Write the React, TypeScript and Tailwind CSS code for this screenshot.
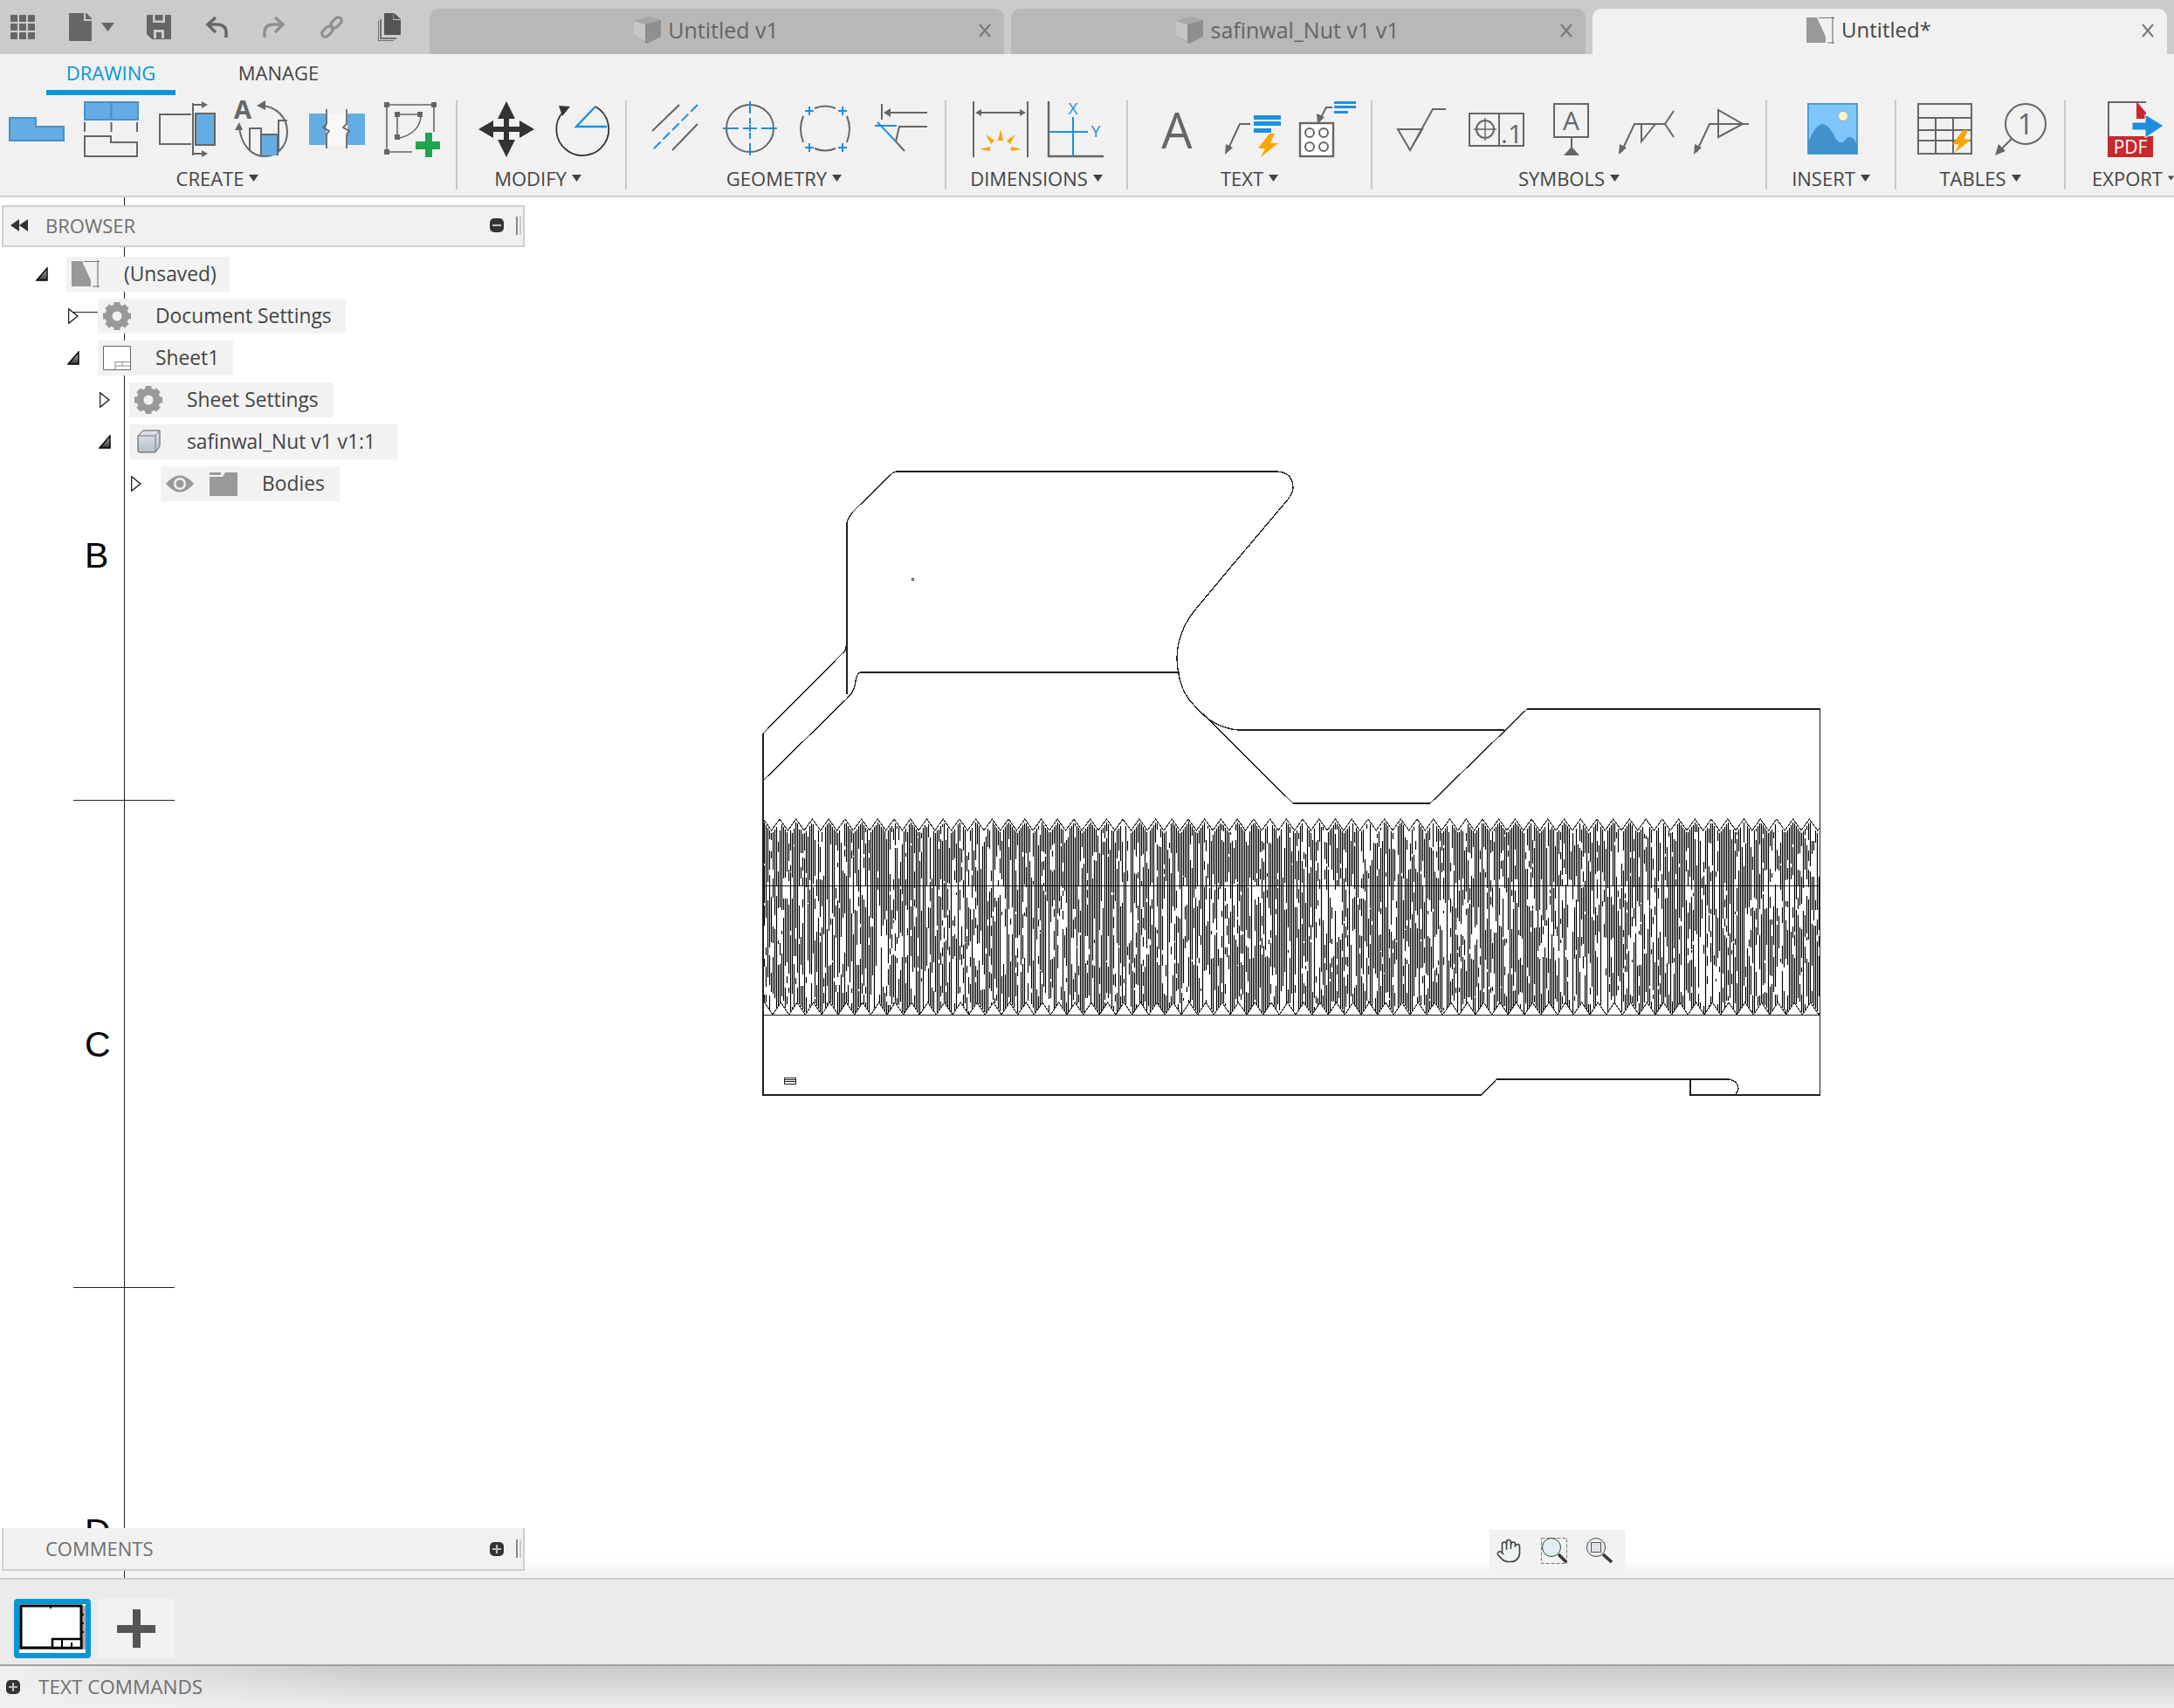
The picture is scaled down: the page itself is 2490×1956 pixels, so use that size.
import { useMemo, type ReactNode } from "react";
import { Hand } from "lucide-react";

const GRAY = "#666666";
const BLUE = "#1e8fe0";
const AMBER = "#f9a400";

// ---- drawing data -------------------------------------------------------

function makeNoise(seed: number) {
  const table: number[] = [];
  let s = seed;
  for (let i = 0; i < 65536; i++) {
    s = (s * 1664525 + 1013904223) >>> 0;
    table.push((s >>> 16) / 65536);
  }
  const at = (a: number, b: number) => table[((a * 1271 + b * 3119) >>> 0) % 65536];
  const smooth = (t: number) => t * t * (3 - 2 * t);
  return (x: number, y: number) => {
    const fx = Math.floor(x);
    const fy = Math.floor(y);
    const u = smooth(x - fx);
    const v = smooth(y - fy);
    const top = at(fx, fy) * (1 - u) + at(fx + 1, fy) * u;
    const bottom = at(fx, fy + 1) * (1 - u) + at(fx + 1, fy + 1) * u;
    return top * (1 - v) + bottom * v;
  };
}

const PITCH = 18.72;

function crest(x: number, start: number) {
  const f = (((x - start) / PITCH) % 1 + 1) % 1;
  return 1 - Math.abs(2 * f - 1);
}

function threadTop(x: number) {
  return 938 + 13 * crest(x, 893);
}

function threadBottom(x: number) {
  return 1162 - 14 * crest(x, 885);
}

function buildHatch() {
  const noise = makeNoise(77);
  let d = "";
  for (let x = 875; x < 2084; x += 2) {
    const y0 = Math.ceil(threadTop(x)) + 3;
    const y1 = Math.floor(threadBottom(x));
    let start = -1;
    for (let y = y0; y <= y1; y++) {
      const n = noise(x / 2.6, y / 34) * 0.62 + noise(x / 1.6, y / 11 + 40) * 0.38;
      const limit = y < 1014 ? 0.41 : 0.45;
      // thin jagged strands stay inside the white channels
      const strand = x % 8 === 1 && noise(x / 2, y / 14 + 90) > 0.35;
      const on = n > limit || strand;
      if (on && start < 0) start = y;
      if ((!on || y === y1) && start >= 0) {
        if (y - start > 2) d += `M${x + 0.5} ${start}V${y}`;
        start = -1;
      }
    }
  }
  return d;
}

function buildZigzag(edge: (x: number) => number, start: number) {
  let d = `M874 ${edge(874).toFixed(1)}`;
  for (let x = start - PITCH; x < 2084; x += PITCH / 2) {
    if (x > 874) d += `L${x.toFixed(1)} ${edge(x).toFixed(1)}`;
  }
  return `${d}L2084 ${edge(2084).toFixed(1)}`;
}

function NutDrawing() {
  const hatch = useMemo(buildHatch, []);
  const top = useMemo(() => buildZigzag(threadTop, 893), []);
  const bottom = useMemo(() => buildZigzag(threadBottom, 885), []);
  return (
    <svg
      className="absolute left-0 top-0 h-[1581px] w-[2490px]"
      viewBox="0 226 2490 1581"
      fill="none"
      stroke="#1f1f1f"
      strokeWidth="1.3"
      shapeRendering="crispEdges"
    >
      {/* sheet frame */}
      <path d="M142.5 226V1807M84 357.5H200M84 916.5H200M84 1474.5H200" stroke="#222" strokeWidth="1.1" />
      {/* part outline */}
      <path d="M970 795V598Q974 588 980 583L1023 541Q1025 540 1028 540H1463Q1481 541 1481 559Q1481 566 1470 578L1405 655L1370 697Q1349 722 1348 753Q1349 790 1368 808Q1388 833 1418 836H1723" />
      <path d="M1351 770H985Q981 772 980 780Q979 792 970 800L874 894" />
      <path d="M969.5 737Q969 746 965 748L874 840" />
      <path d="M1368 808L1481 920H1638L1749 812H2084.5V1254H1988L1991 1247Q1991 1238 1980 1236H1714L1697 1254H874V840" />
      <path d="M1936 1236V1254H1988" />
      <path d="M874 1162.5H2084M874 1014.5H2084" strokeWidth="1.6" />
      <rect x="1044" y="662" width="2.5" height="2.5" strokeWidth="0.8" />
      <path d="M898 1234H911V1241H898ZM898 1236.5H911M898 1238.5H911" strokeWidth="1" />
      {/* thread */}
      <path d={hatch} strokeWidth="1.15" stroke="#000" shapeRendering="auto" />
      <path d={top} strokeWidth="1.1" stroke="#333" />
      <path d={bottom} strokeWidth="1.1" stroke="#333" />
    </svg>
  );
}

// ---- small icons --------------------------------------------------------

function Ico({ children }: { children: ReactNode }) {
  return (
    <svg className="h-16 w-16 shrink-0 overflow-visible" viewBox="0 0 64 64" fill="none" stroke={GRAY} strokeWidth="2">
      {children}
    </svg>
  );
}

function Bolt({ x, y, s = 1 }: { x: number; y: number; s?: number }) {
  return (
    <polygon
      transform={`translate(${x} ${y}) scale(${s})`}
      points="13,0 0,17 8,17 3,27 23,11 14,11 19,0"
      fill={AMBER}
      stroke="none"
    />
  );
}

const BaseViewIcon = () => (
  <Ico>
    <path d="M1 19H31V29H63V45H1Z" fill="#63ade4" stroke="#4f8fc0" />
  </Ico>
);

const ProjectedIcon = () => (
  <Ico>
    <rect x="1" y="1" width="61" height="20" fill="#63ade4" stroke="#4f8fc0" />
    <path d="M31.5 1V21" stroke="#4f8fc0" />
    <path d="M1 24V35M31.5 24V35M61 24V35" />
    <path d="M1 40H31V47H61V63H1Z" />
  </Ico>
);

const SectionIcon = () => (
  <Ico>
    <path d="M37 15H1V49H37" />
    <rect x="42" y="14" width="22" height="36" fill="#63ade4" />
    <path d="M39 2V62M39 4H50M39 60H50" />
    <path d="M49 0L56 4L49 8ZM49 56L56 60L49 64Z" fill={GRAY} stroke="none" />
  </Ico>
);

const DetailIcon = () => (
  <Ico>
    <text x="0" y="20" fontSize="29" fontWeight="700" fill={GRAY} stroke="none">A</text>
    <path d="M32 5C48 6 61 18 61 35C61 51 50 63 35 63C20 63 8 50 6 29" />
    <path d="M26 5L36 -1V10ZM6 24L1 33H10Z" fill={GRAY} stroke="none" />
    <rect x="32" y="38" width="18" height="24" fill="#63ade4" stroke="none" />
    <path d="M18 57V31H31V63M32 38H50V62M51 56V22H61" />
  </Ico>
);

const BreakIcon = () => (
  <Ico>
    <rect x="0" y="14" width="64" height="36" fill="#63ade4" stroke="none" />
    <rect x="20" y="14" width="24" height="36" fill="#f8f8f8" stroke="none" />
    <path d="M20 9V26L16 30L23 34L20 38V54M43 9V26L39 30L46 34L43 38V54" strokeWidth="1.8" />
  </Ico>
);

const SketchIcon = () => (
  <Ico>
    <path d="M6 4H54M3 7V55M6 58H32M57 7V35" strokeWidth="1.6" />
    <path d="M0 1H6V7H0ZM54 1H60V7H54ZM0 55H6V61H0ZM12 12H18V18H12ZM38 12H44V18H38ZM12 38H18V44H12Z" fill={GRAY} stroke="none" />
    <path d="M18 15H38M15 18V38" strokeWidth="1.6" />
    <path d="M42 18Q40 36 18 42" strokeWidth="1.6" />
    <path d="M47 36H55V46H64V55H55V64H47V55H36V46H47Z" fill="#1fa750" stroke="none" />
  </Ico>
);

const MoveIcon = () => (
  <Ico>
    <path d="M32 0L22 20H29V29H17V22L0 32L17 42V35H29V44H22L32 64L42 44H35V35H47V42L64 32L47 22V29H35V20H42Z" fill="#333" stroke="none" />
  </Ico>
);

const RotateIcon = () => (
  <Ico>
    <path d="M11 12A30 30 0 1 0 48 6" stroke="#333" strokeWidth="1.8" />
    <polygon points="6,5 19,6 10,17" fill="#333" stroke="none" />
    <path d="M48 6L26 29H61" stroke={BLUE} strokeWidth="2.4" />
  </Ico>
);

const CenterlineIcon = () => (
  <Ico>
    <path d="M38 4L7 34M59 26L30 56" />
    <path d="M59 4L6 57" stroke={BLUE} strokeDasharray="11 4" />
  </Ico>
);

const CenterMarkIcon = () => (
  <Ico>
    <circle cx="33" cy="31" r="27" />
    <path d="M33 0V14M33 19V26M33 36V43M33 48V62M2 31H20M25 31H30M36 31H41M46 31H64M29 31H37M33 27V35" stroke={BLUE} />
  </Ico>
);

const CenterPatternIcon = () => (
  <Ico>
    <path d="M21 8Q33 3 45 8M21 54Q33 59 45 54M8 17Q2 31 8 47M58 17Q64 31 58 47" />
    <path d="M15 6V16M10 11H20M53 6V16M48 11H58M15 48V58M10 53H20M53 48V58M48 53H58" stroke={BLUE} />
  </Ico>
);

const EdgeLeaderIcon = () => (
  <Ico>
    <path d="M12 3V21" />
    <path d="M17 13H64" />
    <path d="M14 13L22 8V18Z" fill={GRAY} stroke="none" />
    <path d="M64 29H32L28 46L38 57" />
    <path d="M4 28H29M7 24L28 46" stroke={BLUE} />
  </Ico>
);

const DimensionIcon = () => (
  <Ico>
    <path d="M1 0V64M63 0V64M8 13H56" />
    <path d="M3 13L10 9V17ZM61 13L54 9V17Z" fill={GRAY} stroke="none" />
    <path d="M32 32L35 45H29ZM15 38L25 45L21 49ZM49 38L39 45L43 49ZM8 55L20 52V57ZM56 55L44 52V57Z" fill={AMBER} stroke="none" />
  </Ico>
);

const OrdinateIcon = () => (
  <Ico>
    <path d="M1 0V63H64" strokeWidth="2.4" />
    <path d="M29 18V63M1 35H46" stroke={BLUE} />
    <text x="29" y="15" fontSize="19" textAnchor="middle" fill={BLUE} stroke="none">X</text>
    <text x="55" y="41" fontSize="19" textAnchor="middle" fill={BLUE} stroke="none">Y</text>
  </Ico>
);

const TextIcon = () => (
  <Ico>
    <text x="32" y="54" fontSize="56" fontWeight="500" textAnchor="middle" fill={GRAY} stroke="none">A</text>
  </Ico>
);

const NoteIcon = () => (
  <Ico>
    <path d="M30 26H18L4 56" />
    <path d="M1 61L2 49L10 53Z" fill={GRAY} stroke="none" />
    <path d="M34 16H65V21H34ZM34 23H65V28H34ZM34 31H54V36H34Z" fill={BLUE} stroke="none" />
    <Bolt x={39} y={37} />
  </Ico>
);

const HoleNoteIcon = () => (
  <Ico>
    <rect x="1" y="25" width="38" height="38" fill="#fff" strokeWidth="2.4" />
    <circle cx="12" cy="36" r="5" />
    <circle cx="28" cy="36" r="5" />
    <circle cx="12" cy="52" r="5" />
    <circle cx="28" cy="52" r="5" />
    <path d="M38 7H31L24 20" />
    <path d="M21 26L20 14L29 18Z" fill={GRAY} stroke="none" />
    <path d="M40 0H65V3H40ZM40 5H65V8H40ZM40 11H56V14H40Z" fill={BLUE} stroke="none" />
  </Ico>
);

const SurfaceIcon = () => (
  <Ico>
    <path d="M5 32H33L19 56ZM19 56L45 9H60" />
  </Ico>
);

const FeatureFrameIcon = () => (
  <Ico>
    <rect x="1" y="14" width="62" height="37" />
    <path d="M35 14V51" />
    <circle cx="19" cy="32" r="10" />
    <path d="M19 19V45M6 32H32" strokeWidth="1.4" />
    <text x="37" y="48" fontSize="30" fill={GRAY} stroke="none">.1</text>
  </Ico>
);

const DatumIcon = () => (
  <Ico>
    <rect x="12" y="3" width="39" height="38" />
    <text x="31.5" y="33" fontSize="30" textAnchor="middle" fill={GRAY} stroke="none">A</text>
    <path d="M32 41V54" />
    <path d="M23 62H41L32 52Z" fill={GRAY} stroke="none" />
  </Ico>
);

const WeldIcon = () => (
  <Ico>
    <path d="M53 26H18L3 58M26 26V46L42 26M53 26L63 11M53 26L63 41" />
    <path d="M0 61L1 49L9 53Z" fill={GRAY} stroke="none" />
  </Ico>
);

const TaperIcon = () => (
  <Ico>
    <path d="M63 26H18L3 58M28 10V41L56 26Z" />
    <path d="M0 61L1 49L9 53Z" fill={GRAY} stroke="none" />
  </Ico>
);

const ImageIcon = () => (
  <Ico>
    <rect x="5" y="3" width="56" height="57" fill="#7fc6fb" stroke="#4a9ed8" />
    <circle cx="45" cy="17" r="6" fill="#fdf5c0" stroke="#8dbfe6" />
    <path d="M5 60V48Q13 26 22 26Q30 28 36 42Q41 50 46 46Q50 40 54 41Q60 44 61 52V60Z" fill="#4291cb" stroke="none" />
  </Ico>
);

const TableIcon = () => (
  <Ico>
    <path d="M1 3H62V60H1ZM1 19H62M1 33H62M1 45H62M21 19V60M41 19V60" />
    <Bolt x={40} y={33} s={0.95} />
  </Ico>
);

const BalloonIcon = () => (
  <Ico>
    <circle cx="38" cy="26" r="23" />
    <text x="38" y="38" fontSize="32" textAnchor="middle" fill={GRAY} stroke="none">1</text>
    <path d="M22 43L9 56" />
    <path d="M3 62L7 49L15 57Z" fill={GRAY} stroke="none" />
  </Ico>
);

const ExportIcon = () => (
  <Ico>
    <path d="M44 1H1V44" />
    <path d="M33 0L44 13V20H33Z" fill="#c9282d" stroke="none" />
    <rect x="0" y="40" width="52" height="24" fill="#c9282d" stroke="none" />
    <path d="M28 24H43V15L64 28L43 42V33H28Z" fill={BLUE} stroke="#f1f1f1" strokeWidth="1" />
    <text x="26" y="60" fontSize="21" textAnchor="middle" fill="#fff" stroke="none">PDF</text>
  </Ico>
);

function Caret() {
  return (
    <svg className="h-2 w-[11px]" viewBox="0 0 11 8">
      <path d="M0 0H11L5.5 8Z" fill="#444" />
    </svg>
  );
}

function CubeIcon() {
  return (
    <svg className="h-8 w-8 shrink-0" viewBox="0 0 32 32">
      <path d="M1 5L17 0L32 4V23L16 31L1 21Z" fill="#8f8f8f" />
      <path d="M1 5L17 0L32 4L14 9Z" fill="#a8a8a8" />
      <path d="M1 5L14 9V29L1 21Z" fill="#c6c6c6" />
    </svg>
  );
}

function DrawingIcon() {
  return (
    <svg className="h-8 w-8 shrink-0" viewBox="0 0 32 32">
      <path d="M0 1H12L22 23V30H0Z" fill="#999" />
      <path d="M14 1.5H32M30 0V31M24 30H32" stroke="#777" strokeWidth="1.2" fill="none" />
    </svg>
  );
}

function TabClose() {
  return (
    <svg className="h-[18px] w-[18px] shrink-0" viewBox="0 0 18 18">
      <path d="M3 2L15 16M15 2L3 16" stroke="#777" strokeWidth="2" />
    </svg>
  );
}

function Gear() {
  const teeth = [0, 45, 90, 135, 180, 225, 270, 315];
  return (
    <svg className="h-8 w-8 shrink-0" viewBox="0 0 32 32">
      <circle cx="16" cy="16" r="9.5" fill="none" stroke="#999" strokeWidth="8" />
      {teeth.map((a) => (
        <rect key={a} x="12.5" y="0" width="7" height="6" fill="#999" transform={`rotate(${a} 16 16)`} />
      ))}
    </svg>
  );
}

function SheetIcon() {
  return (
    <svg className="h-8 w-8 shrink-0" viewBox="0 0 32 32">
      <path d="M0.5 2.5H31.5V29.5H0.5Z" fill="#fff" stroke="#666" />
      <path d="M14 20.5H31M14 25H31M14 20V29M22 20V25" stroke="#888" fill="none" />
    </svg>
  );
}

function ComponentIcon() {
  return (
    <svg className="h-8 w-8 shrink-0" viewBox="0 0 32 32">
      <defs>
        <linearGradient id="cube" x1="0" y1="0" x2="0" y2="1">
          <stop offset="0" stopColor="#dfe3ea" />
          <stop offset="1" stopColor="#b8c0cc" />
        </linearGradient>
      </defs>
      <path d="M4 9L10 3H29V21L24 28H6Q4 28 4 26Z" fill="url(#cube)" stroke="#555" />
      <path d="M4 9H24V28M24 9L29 3" fill="none" stroke="#777" />
    </svg>
  );
}

function EyeIcon() {
  return (
    <svg className="h-8 w-8 shrink-0" viewBox="0 0 32 32">
      <path d="M0 16Q16 -3 32 16Q16 35 0 16Z" fill="#999" />
      <circle cx="16" cy="16" r="7" fill="#f2f2f2" />
      <circle cx="16" cy="16" r="4.5" fill="#999" />
    </svg>
  );
}

function FolderIcon() {
  return (
    <svg className="h-8 w-8 shrink-0" viewBox="0 0 32 32">
      <path d="M0 3H13V6H0ZM0 8H15L18 3H32V30H0Z" fill="#999" />
    </svg>
  );
}

function Expander({ open, className }: { open: boolean; className?: string }) {
  return open ? (
    <svg className={`h-4 w-[14px] shrink-0 ${className ?? ""}`} viewBox="0 0 14 16">
      <defs>
        <linearGradient id="tri" x1="0" y1="0" x2="0" y2="1">
          <stop offset="0" stopColor="#bbb" />
          <stop offset="1" stopColor="#333" />
        </linearGradient>
      </defs>
      <path d="M13 1V15H1Z" fill="url(#tri)" stroke="#000" strokeWidth="1.4" />
    </svg>
  ) : (
    <svg className={`h-[18px] w-3 shrink-0 ${className ?? ""}`} viewBox="0 0 12 18">
      <path d="M0.7 0.7L11 9L0.7 17.3Z" fill="#fff" stroke="#000" strokeWidth="1.1" />
    </svg>
  );
}

function RoundBadge({ plus }: { plus?: boolean }) {
  return (
    <div className="flex h-4 w-4 shrink-0 items-center justify-center rounded-[5px] bg-[#333]">
      <svg className="h-3 w-3" viewBox="0 0 12 12">
        <path d={plus ? "M1 6H11M6 1V11" : "M1 6H11"} stroke="#bbb" strokeWidth="2.2" />
      </svg>
    </div>
  );
}

// ---- title bar and ribbon -----------------------------------------------

function QuickAccess() {
  return (
    <div className="flex w-[492px] shrink-0 items-center pl-3 text-[#666]">
      <svg className="h-7 w-7" viewBox="0 0 28 28" fill="#666">
        {[0, 10, 20].map((y) =>
          [0, 10, 20].map((x) => <rect key={`${x}-${y}`} x={x} y={y} width="8" height="8" rx="1" />),
        )}
      </svg>
      <svg className="ml-[39px] h-8 w-[26px]" viewBox="0 0 26 32">
        <path d="M1 0H17L26 9V31Q26 32 25 32H1Q0 32 0 31V1Q0 0 1 0Z" fill="#666" />
        <path d="M17 0V9H26Z" fill="#cbcbcb" />
        <path d="M18 0L26 8H18Z" fill="#666" transform="translate(1 -1)" />
      </svg>
      <svg className="ml-[11px] h-[10px] w-[15px]" viewBox="0 0 15 10">
        <path d="M0 0H15L7.5 10Z" fill="#666" />
      </svg>
      <svg className="ml-[37px] h-7 w-7" viewBox="0 0 28 28">
        <path d="M1 0H27Q28 0 28 1V27Q28 28 27 28H6L0 22V1Q0 0 1 0Z" fill="#666" />
        <path d="M7 0H21V9H7ZM8 27V17H20V27H17V20H11V27Z" fill="#cbcbcb" />
        <path d="M9.5 0H18.5V6.5H9.5Z" fill="#666" />
      </svg>
      <svg className="ml-[39px] h-6 w-[26px]" viewBox="0 0 26 24" fill="none" stroke="#666" strokeWidth="3.5">
        <path d="M24 24V18Q24 9 13 9H4" />
        <path d="M12 1L3 9L12 18" />
      </svg>
      <svg className="ml-10 h-6 w-[26px]" viewBox="0 0 26 24" fill="none" stroke="#8f8f8f" strokeWidth="3.5">
        <path d="M2 24V18Q2 9 13 9H22" />
        <path d="M14 1L23 9L14 18" />
      </svg>
      <svg className="ml-10 h-[26px] w-[26px]" viewBox="0 0 26 26" fill="none" stroke="#8f8f8f" strokeWidth="3.2">
        <rect x="-6.5" y="-4" width="14" height="8" rx="4" transform="translate(7.5 18.5) rotate(-45)" />
        <rect x="-7.5" y="-4" width="14" height="8" rx="4" transform="translate(18.5 7.5) rotate(-45)" />
      </svg>
      <svg className="ml-10 h-8 w-[26px]" viewBox="0 0 26 32">
        <path d="M0 9V32H18" fill="none" stroke="#555" strokeWidth="1.5" />
        <path d="M3 7V29H21" fill="none" stroke="#555" strokeWidth="1.5" />
        <path d="M7 1Q7 0 8 0H17L26 8V24Q26 25 25 25H8Q7 25 7 24Z" fill="#555" />
        <path d="M17 0V8H26Z" fill="#cbcbcb" />
        <path d="M17.5 -1L26 7H17.5Z" fill="#555" />
      </svg>
    </div>
  );
}

function DocTab({ icon, label, active }: { icon: ReactNode; label: string; active?: boolean }) {
  return (
    <div
      className={`flex h-[52px] w-[658px] items-center rounded-t-[10px] pb-[2px] pl-[6px] pr-[13px] ${
        active ? "bg-[#f1f1f1] text-[#444]" : "bg-[#b8b8b8] text-[#666]"
      }`}
    >
      <div className={`flex flex-1 items-center justify-center gap-2 leading-none ${active ? "text-[24px]" : "text-[25px]"}`}>
        {icon}
        <span className="-mt-[2px]">{label}</span>
      </div>
      <TabClose />
    </div>
  );
}

function Group({
  label,
  width,
  inset,
  labelClass,
  last,
  children,
}: {
  label: string;
  width: string;
  inset: string;
  labelClass?: string;
  last?: boolean;
  children: ReactNode;
}) {
  return (
    <div className={`flex h-[102px] shrink-0 flex-col ${width} ${last ? "" : "border-r-2 border-[#c8c8c8]"}`}>
      <div className={`flex h-[65px] shrink-0 items-end gap-[22px] ${inset}`}>{children}</div>
      <div className={`mt-[10px] flex h-7 shrink-0 items-center gap-[6px] whitespace-nowrap text-[22px] text-[#444] ${labelClass ?? "justify-center"}`}>
        <span>{label}</span>
        <Caret />
      </div>
    </div>
  );
}

function Ribbon() {
  return (
    <div className="h-[164px] shrink-0 border-b-2 border-[#cfcfcf] bg-[#f1f1f1]">
      <div className="flex h-[47px] text-[22px]">
        <div className="ml-[53px] flex w-[148px] items-center justify-center border-b-[6px] border-[#0696d7] pt-[2px] text-[#0696d7]">
          DRAWING
        </div>
        <div className="ml-11 flex w-[148px] items-center justify-center pb-[6px] pt-[2px] text-[#444]">MANAGE</div>
      </div>
      <div className="mt-[6px] flex">
        <Group label="CREATE" width="w-[524px]" inset="pl-[10px]" labelClass="justify-center pr-6">
          <BaseViewIcon />
          <ProjectedIcon />
          <SectionIcon />
          <DetailIcon />
          <BreakIcon />
          <SketchIcon />
        </Group>
        <Group label="MODIFY" width="w-[194px]" inset="pl-6" labelClass="justify-center pr-2">
          <MoveIcon />
          <RotateIcon />
        </Group>
        <Group label="GEOMETRY" width="w-[366px]" inset="pl-[22px]" labelClass="justify-center pr-1">
          <CenterlineIcon />
          <CenterMarkIcon />
          <CenterPatternIcon />
          <EdgeLeaderIcon />
        </Group>
        <Group label="DIMENSIONS" width="w-[208px]" inset="pl-[30px]">
          <DimensionIcon />
          <OrdinateIcon />
        </Group>
        <Group label="TEXT" width="w-[280px]" inset="pl-6">
          <TextIcon />
          <NoteIcon />
          <HoleNoteIcon />
        </Group>
        <Group label="SYMBOLS" width="w-[452px]" inset="pl-6">
          <SurfaceIcon />
          <FeatureFrameIcon />
          <DatumIcon />
          <WeldIcon />
          <TaperIcon />
        </Group>
        <Group label="INSERT" width="w-[148px]" inset="pl-[42px]">
          <ImageIcon />
        </Group>
        <Group label="TABLES" width="w-[194px]" inset="pl-6">
          <TableIcon />
          <BalloonIcon />
        </Group>
        <Group label="EXPORT" width="w-[124px]" inset="pl-12" labelClass="pl-[30px]" last>
          <ExportIcon />
        </Group>
      </div>
    </div>
  );
}

// ---- browser tree -------------------------------------------------------

function TreeRow({
  depth,
  open,
  expanderClass,
  icon,
  label,
  pill,
}: {
  depth: string;
  open: boolean;
  expanderClass: string;
  icon: ReactNode;
  label: string;
  pill: string;
}) {
  return (
    <div className={`flex h-10 items-center ${depth}`}>
      <div className="flex w-9 items-center">
        <Expander open={open} className={expanderClass} />
      </div>
      <div className={`flex h-10 items-center bg-[#f2f2f2] text-[22.8px] text-[#444] ${pill}`}>
        {icon}
        <span className="ml-[28px] whitespace-nowrap">{label}</span>
      </div>
    </div>
  );
}

function Tree() {
  return (
    <div className="absolute left-0 top-[68px] flex flex-col gap-2">
      <TreeRow depth="pl-10" open expanderClass="ml-[1px]" icon={<DrawingIcon />} label="(Unsaved)" pill="pl-[6px] pr-[15px]" />
      <TreeRow depth="pl-[76px]" open={false} expanderClass="ml-[2px]" icon={<Gear />} label="Document Settings" pill="pl-[6px] pr-4" />
      <TreeRow depth="pl-[76px]" open expanderClass="ml-[1px]" icon={<SheetIcon />} label="Sheet1" pill="pl-[6px] pr-4" />
      <TreeRow depth="pl-[112px]" open={false} expanderClass="ml-[2px]" icon={<Gear />} label="Sheet Settings" pill="pl-[6px] pr-[17px]" />
      <TreeRow depth="pl-[112px]" open expanderClass="ml-[1px]" icon={<ComponentIcon />} label="safinwal_Nut v1 v1:1" pill="pl-[6px] pr-[25px]" />
      <TreeRow
        depth="pl-[148px]"
        open={false}
        expanderClass="ml-[2px]"
        icon={
          <>
            <EyeIcon />
            <div className="ml-[18px]">
              <FolderIcon />
            </div>
          </>
        }
        label="Bodies"
        pill="pl-[6px] pr-[17px]"
      />
    </div>
  );
}

function Panel({
  title,
  className,
  leading,
  badge,
}: {
  title: string;
  className: string;
  leading?: ReactNode;
  badge: ReactNode;
}) {
  return (
    <div className={`absolute left-[2px] flex w-[599px] items-center border-x-2 border-b-2 border-[#cfcfcf] bg-[#f1f1f1] ${className}`}>
      <div className="flex w-[47px] shrink-0 items-center pl-[8px]">{leading}</div>
      <span className="flex-1 pl-[1px] text-[22px] text-[#6f6f6f]">{title}</span>
      {badge}
      <div className="ml-[14px] mr-[2px] flex h-[21px] gap-[2px]">
        <div className="w-[2px] bg-[#888]" />
        <div className="w-[2px] bg-[#ccc]" />
      </div>
    </div>
  );
}

function SheetThumb() {
  return (
    <div className="h-[68px] w-[88px] rounded-[4px] border-[6px] border-[#0696d7] bg-white">
      <svg className="h-14 w-[76px]" viewBox="0 0 76 56">
        <rect x="0" y="2" width="76" height="50" fill="#aaa" />
        <rect x="2" y="2" width="69" height="48" fill="#fff" stroke="#000" strokeWidth="3" />
        <rect x="38" y="46" width="33" height="4" fill="#000" />
        <path d="M38 40H71V50H38Z" fill="#fff" stroke="#000" strokeWidth="2.5" />
        <path d="M49 40V50M60 44V50" stroke="#000" strokeWidth="2" />
        <path d="M0 30H3M36 2V5M71 12H74M71 22H74M71 32H74" stroke="#000" strokeWidth="2" />
      </svg>
    </div>
  );
}

function NavBar() {
  return (
    <div className="absolute left-[1706px] top-[1526px] flex h-12 w-[156px] items-center gap-[22px] bg-[#f2f2f2] pl-[7px]">
      <Hand className="h-[30px] w-[30px]" fill="#eef2f3" stroke="#444" strokeWidth={1.3} />
      <svg className="h-[30px] w-[30px]" viewBox="0 0 30 30">
        <rect x="0.5" y="0.5" width="29" height="29" fill="none" stroke="#777" strokeDasharray="4 2" />
        <circle cx="12" cy="11" r="10.5" fill="#dfeeee" stroke="#444" />
        <path d="M20 19L29 28" stroke="#333" strokeWidth="3.6" />
      </svg>
      <svg className="h-[30px] w-[30px]" viewBox="0 0 30 30">
        <circle cx="11" cy="11" r="10.5" fill="#e9f1f1" stroke="#444" />
        <rect x="5.5" y="5.5" width="11" height="11" fill="#dfe4e8" stroke="#555" />
        <path d="M19 19L29 28" stroke="#333" strokeWidth="3.6" />
      </svg>
    </div>
  );
}

export default function App() {
  return (
    <div className="flex h-[1956px] w-[2490px] flex-col overflow-hidden bg-white font-['Open_Sans',sans-serif]">
      <header className="flex h-[62px] shrink-0 bg-[#cbcbcb]">
        <QuickAccess />
        <div className="mt-[10px] flex gap-2">
          <DocTab icon={<CubeIcon />} label="Untitled v1" />
          <DocTab icon={<CubeIcon />} label="safinwal_Nut v1 v1" />
          <DocTab icon={<DrawingIcon />} label="Untitled*" active />
        </div>
      </header>

      <Ribbon />

      <main className="relative flex-1 overflow-hidden bg-white">
        <div className="absolute inset-x-0 bottom-0 h-6 bg-linear-to-b from-white to-[#f1f1f1]" />
        <NutDrawing />
        <span className="absolute left-[97px] top-[390px] font-['Liberation_Sans',sans-serif] text-[41px] leading-none text-black">B</span>
        <span className="absolute left-[97px] top-[950px] font-['Liberation_Sans',sans-serif] text-[41px] leading-none text-black">C</span>
        <span className="absolute left-[97px] top-[1508px] font-['Liberation_Sans',sans-serif] text-[41px] leading-none text-black">D</span>

        <Panel
          title="BROWSER"
          className="top-[9px] h-12 border-t-2 pb-[2px]"
          leading={
            <svg className="h-[14px] w-5" viewBox="0 0 20 14">
              <path d="M10 0V14L0 7ZM20 0V14L10 7Z" fill="#333" />
            </svg>
          }
          badge={<RoundBadge />}
        />
        <Tree />
        <Panel title="COMMENTS" className="top-[1524px] h-[49px]" badge={<RoundBadge plus />} />
        <NavBar />
      </main>

      <div className="flex h-[101px] shrink-0 items-center gap-2 border-y-2 border-t-[#cccccc] border-b-[#a0a0a0] bg-[#ebebeb] pl-4 pt-[14px]">
        <SheetThumb />
        <div className="flex h-[68px] w-[88px] items-center justify-center bg-[#f2f2f2]">
          <svg className="h-11 w-11" viewBox="0 0 44 44">
            <path d="M18 0H27V18H44V27H27V44H18V27H0V18H18Z" fill="#555" />
          </svg>
        </div>
      </div>

      <div className="relative flex h-12 shrink-0 items-center bg-linear-to-b from-[#c9c9c9] to-[#ededed] pl-[7px]">
        <div className="absolute inset-y-0 left-0 w-[420px] bg-linear-to-r from-[#f0f0f0] to-transparent" />
        <div className="relative flex items-center gap-[21px]">
          <RoundBadge plus />
          <span className="text-[22.5px] text-[#6f6f6f]">TEXT COMMANDS</span>
        </div>
      </div>
    </div>
  );
}
